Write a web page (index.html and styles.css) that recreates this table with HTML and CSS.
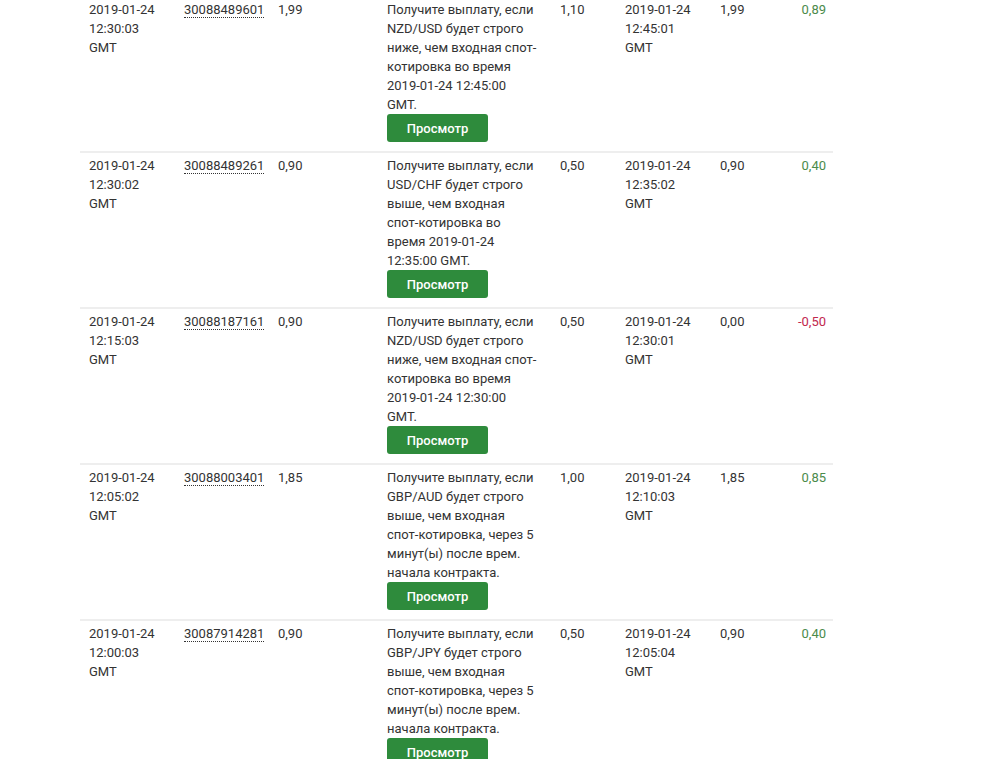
FILE: index.html
```html
<!DOCTYPE html>
<html lang="ru">
<head>
  <meta charset="UTF-8" />
  <meta name="viewport" content="width=device-width, initial-scale=1.0"/>
  <title>Statement</title>
  <link rel="stylesheet" href="styles.css">
</head>
<body>
  <div class="statement">
    <table class="statement-table">
      <colgroup>
        <col class="c-date" />
        <col class="c-ref" />
        <col class="c-buy" />
        <col class="c-desc" />
        <col class="c-stake" />
        <col class="c-sell-date" />
        <col class="c-sell" />
        <col class="c-profit" />
      </colgroup>
      <tbody>
        <tr>
          <td>2019-01-24 12:30:03 GMT</td>
          <td><span class="ref">30088489601</span></td>
          <td>1,99</td>
          <td class="desc">
            Получите выплату, если NZD/USD будет строго ниже, чем входная спот-котировка во время 2019-01-24 12:45:00 GMT.
            <button class="btn">Просмотр</button>
          </td>
          <td>1,10</td>
          <td>2019-01-24 12:45:01 GMT</td>
          <td>1,99</td>
          <td class="profit up">0,89</td>
        </tr>
        <tr>
          <td>2019-01-24 12:30:02 GMT</td>
          <td><span class="ref">30088489261</span></td>
          <td>0,90</td>
          <td class="desc">
            Получите выплату, если USD/CHF будет строго выше, чем входная спот-котировка во время 2019-01-24 12:35:00 GMT.
            <button class="btn">Просмотр</button>
          </td>
          <td>0,50</td>
          <td>2019-01-24 12:35:02 GMT</td>
          <td>0,90</td>
          <td class="profit up">0,40</td>
        </tr>
        <tr>
          <td>2019-01-24 12:15:03 GMT</td>
          <td><span class="ref">30088187161</span></td>
          <td>0,90</td>
          <td class="desc">
            Получите выплату, если NZD/USD будет строго ниже, чем входная спот-котировка во время 2019-01-24 12:30:00 GMT.
            <button class="btn">Просмотр</button>
          </td>
          <td>0,50</td>
          <td>2019-01-24 12:30:01 GMT</td>
          <td>0,00</td>
          <td class="profit down">-0,50</td>
        </tr>
        <tr>
          <td>2019-01-24 12:05:02 GMT</td>
          <td><span class="ref">30088003401</span></td>
          <td>1,85</td>
          <td class="desc">
            Получите выплату, если GBP/AUD будет строго выше, чем входная спот-котировка, через 5 минут(ы) после врем. начала контракта.
            <button class="btn">Просмотр</button>
          </td>
          <td>1,00</td>
          <td>2019-01-24 12:10:03 GMT</td>
          <td>1,85</td>
          <td class="profit up">0,85</td>
        </tr>
        <tr>
          <td>2019-01-24 12:00:03 GMT</td>
          <td><span class="ref">30087914281</span></td>
          <td>0,90</td>
          <td class="desc">
            Получите выплату, если GBP/JPY будет строго выше, чем входная спот-котировка, через 5 минут(ы) после врем. начала контракта.
            <button class="btn">Просмотр</button>
          </td>
          <td>0,50</td>
          <td>2019-01-24 12:05:04 GMT</td>
          <td>0,90</td>
          <td class="profit up">0,40</td>
        </tr>
      </tbody>
    </table>
  </div>
</body>
</html>
```

FILE: styles.css
```css
body {
  margin: 0;
  padding: 0;
  background: #fff;
  font-family: 'Roboto', 'Liberation Sans', sans-serif;
  font-size: 13px;
  line-height: 19px;
  color: #333;
}

.statement {
  margin: -5px 0 0 80px;
  width: 753px;
}

.statement-table {
  width: 100%;
  table-layout: fixed;
  border-collapse: separate;
  border-spacing: 0;
}

.c-date { width: 95px; }
.c-ref { width: 94px; }
.c-buy { width: 109px; }
.c-desc { width: 173px; }
.c-stake { width: 65px; }
.c-sell-date { width: 95px; }
.c-sell { width: 59px; }
.c-profit { width: 63px; }

.statement-table td {
  vertical-align: top;
  text-align: left;
  padding: 3px 9px 9px;
  border-top: 2px solid #eee;
}

/* description column wraps a little narrower than its cell */
.statement-table td.desc {
  padding-right: 13px;
}

.ref {
  border-bottom: 1px dotted #333;
}

.btn {
  display: block;
  width: 101px;
  height: 28px;
  padding: 0;
  border: none;
  border-radius: 3px;
  background: #2e8b3c;
  color: #fff;
  font-family: 'Roboto', 'Liberation Sans', sans-serif;
  font-size: 13px;
  font-weight: 500;
  cursor: pointer;
}

.statement-table td.profit {
  text-align: right;
  padding-right: 7px;
}

.profit.up {
  color: #4b8b4b;
}

.profit.down {
  color: #c2284e;
}
```
